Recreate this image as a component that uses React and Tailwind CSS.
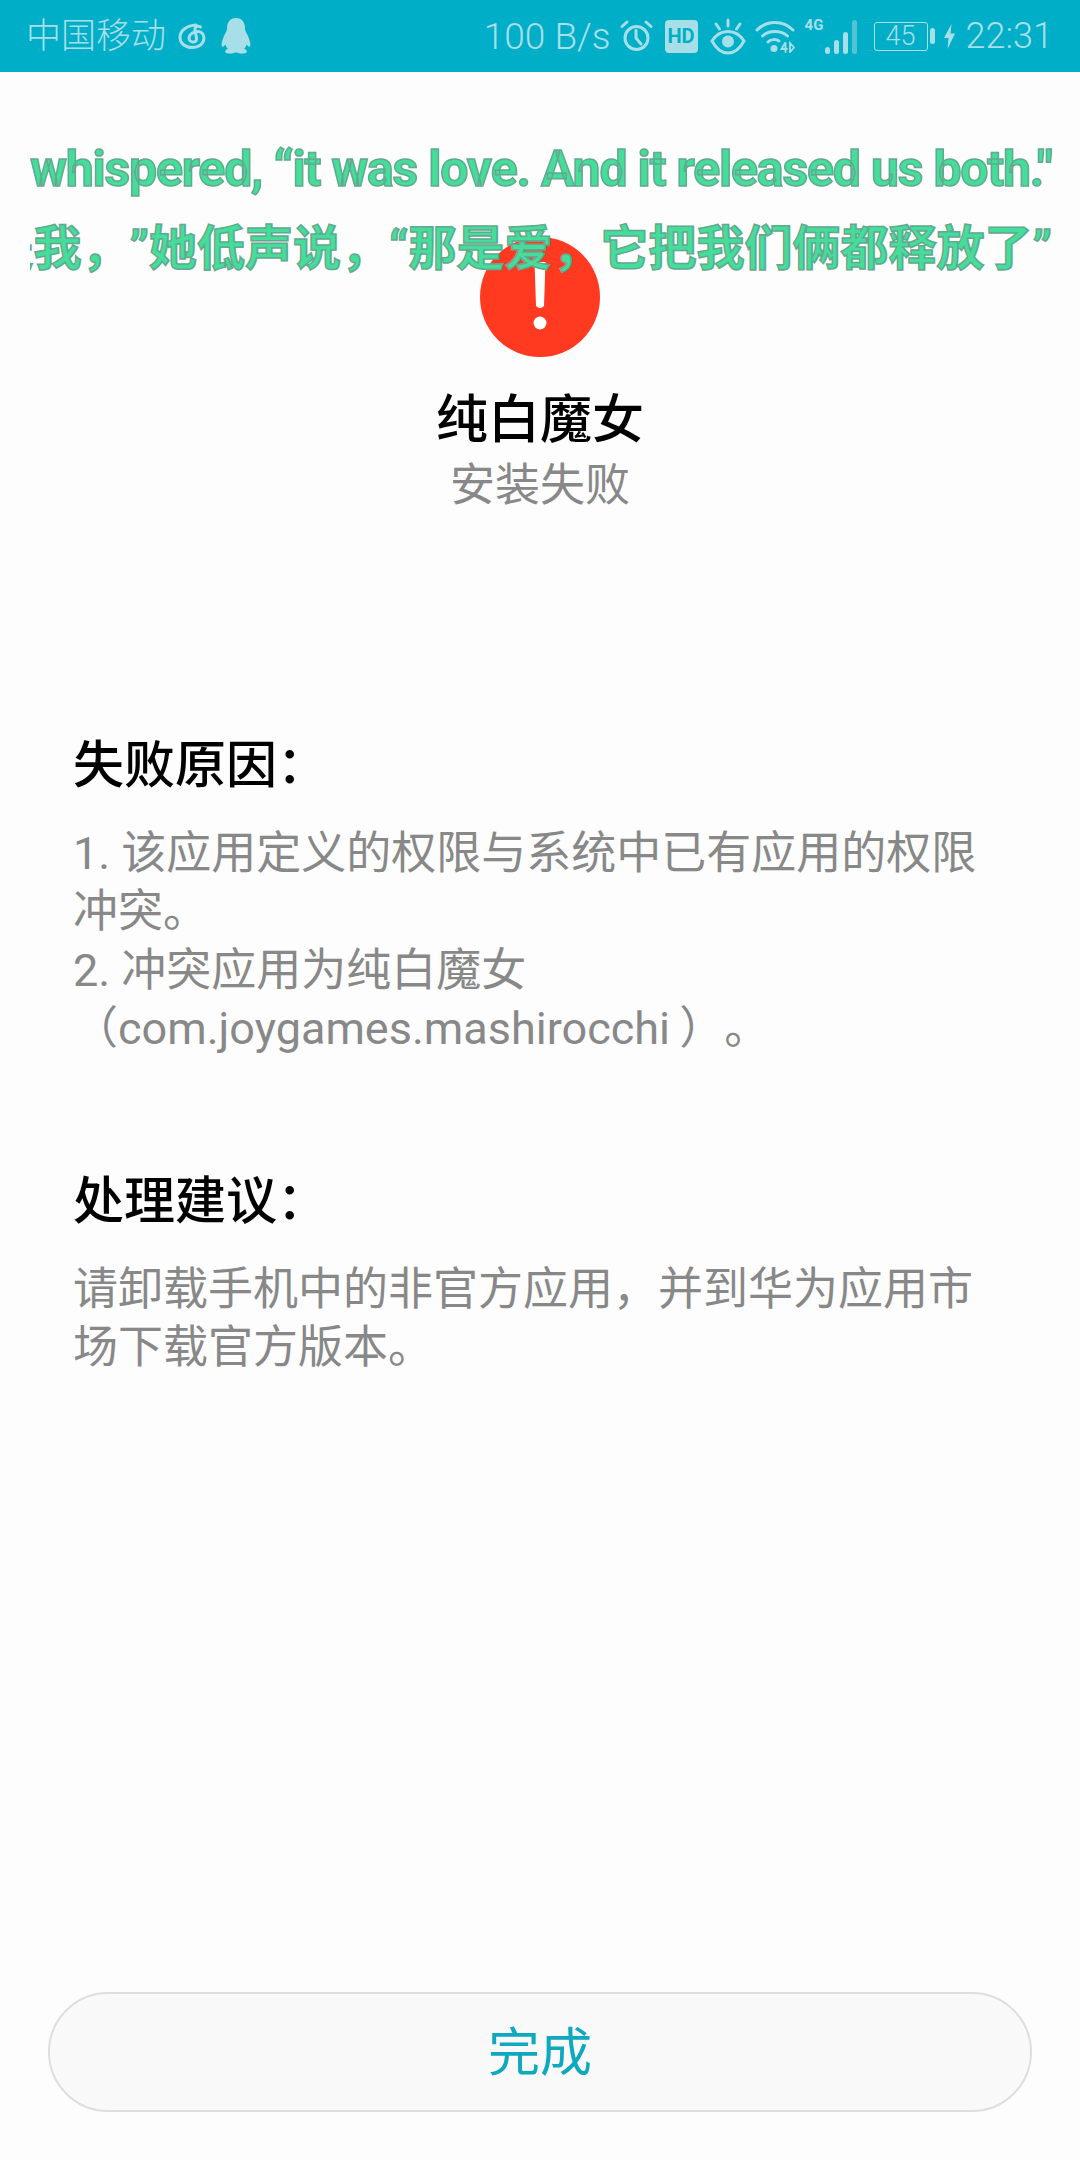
import React from 'react';

const cjk = { fontFamily: 'Roboto, "Noto Sans CJK SC", sans-serif' };

function MusicIcon() {
   return (
      <svg width="28" height="26" viewBox="0 0 28 26" fill="none" stroke="#a6dfe8" strokeWidth="3" strokeLinecap="round">
         <path d="M18 2C9 2.500 2 7.500 2 14.500C2 20.500 7.500 24.500 14 24.500C21 24.500 26 20.500 26 15C26 10.500 22.500 8 19 8.500C15 9 11 11.500 11 15C11 17.500 13 19 15 19C17.500 19 19 17.500 18.500 15L17 7C16.500 4 19.500 2 22.500 4" />
      </svg>
   );
}

function PenguinIcon() {
   return (
      <svg width="30" height="36" viewBox="0 0 30 36" fill="#a6dfe8">
         <path d="M15 0C8.500 0 6 5 6 10C6 13 5 14 3.500 17C1.500 21 0 26 1 28.500C2 29.500 3.500 28 4.500 26.500C5 28.500 5.500 29.500 7 31C4.500 31.500 3.500 33 4.500 34.500C6 36 12 36 14 34.500H16C18 36 24 36 25.500 34.500C26.500 33 25.500 31.500 23 31C24.500 29.500 25 28.500 25.500 26.500C26.500 28 28 29.500 29 28.500C30 26 28.500 21 26.500 17C25 14 24 13 24 10C24 5 21.500 0 15 0Z" />
      </svg>
   );
}

function AlarmIcon() {
   return (
      <svg width="33" height="32" viewBox="0 0 33 32" fill="none" stroke="#a6dfe8" strokeWidth="3" strokeLinecap="round">
         <circle cx="16.500" cy="18" r="11.500" />
         <path d="M16 10.500V18L21 24M2 6.500L7 2M31 6.500L26 2" />
      </svg>
   );
}

function EyeIcon() {
   return (
      <svg width="36" height="37" viewBox="0 0 36 37" fill="none" stroke="#a6dfe8" strokeWidth="3" strokeLinecap="round">
         <path d="M2 23C6 16.500 11 13.500 18 13.500C25 13.500 30 16.500 34 23C30 30.500 25 35 18 35C11 35 6 30.500 2 23Z" />
         <circle cx="18" cy="23.500" r="6" fill="#a6dfe8" stroke="none" />
         <path d="M18 2V8M6 6L9.500 11M30 6L26.500 11" />
      </svg>
   );
}

function WifiIcon() {
   return (
      <svg width="40" height="33" viewBox="0 0 40 33" fill="none" stroke="#a6dfe8" strokeWidth="3" strokeLinecap="round">
         <path d="M2 10C12 0 28 0 38 10M7.500 16C14 10 26 10 32.500 16M13 22C16 19 21 19 24 21" />
         <circle cx="19" cy="28.500" r="3.500" fill="#a6dfe8" stroke="none" />
         <path d="M30 23L26.500 29H32M30.500 23V32M35 23V32L39 27.500Z" strokeWidth="1.800" />
      </svg>
   );
}

function SignalIcon() {
   return (
      <div className="relative w-[52px] h-[36px] flex items-end justify-end gap-[4px]">
         <span className="absolute left-0 top-0 text-[15px] leading-none font-bold text-[#a6dfe8]">4G</span>
         <div className="w-[5px] h-[7px] rounded-full bg-[#a6dfe8]" />
         <div className="w-[5px] h-[14px] rounded-full bg-[#a6dfe8]" />
         <div className="w-[5px] h-[22px] rounded-full bg-[#a6dfe8]" />
         <div className="w-[5px] h-[34px] rounded-full bg-[#55c2d3]" />
      </div>
   );
}

function Battery() {
   return (
      <div className="flex items-center gap-[2px]">
         <div className="w-[54px] h-[29px] rounded-[3px] border border-[#a6dfe8] flex items-center justify-center text-[27px] font-light leading-none text-[#a6dfe8]">45</div>
         <div className="w-[5px] h-[16px] rounded-full bg-[#a6dfe8]" />
      </div>
   );
}

function StatusBar() {
   return (
      <div className="h-[72px] shrink-0 bg-[#00aec7] flex items-center justify-between pl-[26px] pr-[27px] text-[#a6dfe8]">
         <div className="flex items-center">
            <span className="text-[35px] leading-none font-light">中国移动</span>
            <div className="ml-[12px]"><MusicIcon /></div>
            <div className="ml-[15px]"><PenguinIcon /></div>
         </div>
         <div className="flex items-center">
            <span className="text-[37px] leading-none font-light">100 B/s</span>
            <div className="ml-[9px]"><AlarmIcon /></div>
            <div className="ml-[12px] w-[33px] h-[33px] rounded-[4px] bg-[#a6dfe8] flex items-center justify-center text-[20px] font-bold text-[#00aec7] leading-none">HD</div>
            <div className="ml-[12px]"><EyeIcon /></div>
            <div className="ml-[9px]"><WifiIcon /></div>
            <div className="ml-[10px]"><SignalIcon /></div>
            <div className="ml-[17px]"><Battery /></div>
            <svg className="ml-[9px]" width="11" height="25" viewBox="0 0 11 25" fill="#a6dfe8"><path d="M7.500 0L0 14H4.500L3.500 25L11 9.500H6.500Z" /></svg>
            <span className="text-[36px] leading-none font-light ml-[11px]">22:31</span>
         </div>
      </div>
   );
}

function Watermark() {
   const textCls = 'text-[#44dd99] font-bold whitespace-nowrap [-webkit-text-stroke:1.5px_#63a890]';
   return (
      <div className="absolute left-[30px] top-[138px] w-[1022px] overflow-hidden">
         <div className={`${textCls} text-[50px] leading-[62px] tracking-[-1.2px] text-center`}>whispered, “it was love. And it released us both."</div>
         <div className={`${textCls} text-[48px] leading-[62px] flex justify-end mt-[18px] [text-spacing-trim:space-all]`}>是我，”她低声说，“那是爱，它把我们俩都释放了”</div>
      </div>
   );
}

function Section({ title, children, className }) {
   return (
      <div className={className}>
         <h2 className="text-[51px] leading-[62px] font-medium text-black">{title}</h2>
         <p className="mt-[28px] text-[45px] leading-[58.300px] text-[#888888] [text-spacing-trim:space-all]">{children}</p>
      </div>
   );
}

export default function App() {
   return (
      <div className="relative w-[1080px] h-[2160px] bg-[#fdfdfd] flex flex-col overflow-hidden" style={cjk}>
         <StatusBar />

         <div className="flex flex-col items-center pt-[165px]">
            <svg width="120" height="120" viewBox="0 0 120 120">
               <circle cx="60" cy="60" r="60" fill="#ff3a20" />
               <path d="M54.500 25H65.500L64 69Q60 73 56 69Z" fill="#fff" />
               <circle cx="60" cy="86" r="6.500" fill="#fff" />
            </svg>
            <h1 className="mt-[31px] text-[52px] leading-[66px] font-medium text-black">纯白魔女</h1>
            <p className="mt-[2px] text-[45px] leading-[60px] text-[#888888]">安装失败</p>
         </div>

         <div className="px-[73px] pt-[219px] flex-1">
            <Section title="失败原因：">
               1. 该应用定义的权限与系统中已有应用的权限冲突。<br />
               2. 冲突应用为纯白魔女（com.joygames.mashirocchi&thinsp;）。
            </Section>
            <Section title="处理建议：" className="mt-[113px]">
               请卸载手机中的非官方应用，并到华为应用市场下载官方版本。
            </Section>
         </div>

         <div className="px-[48px] pb-[48px]">
            <button className="w-full h-[120px] pt-[3px] rounded-full border-2 border-[#dedede] bg-[#f9f9f9] text-[#0fa9bf] text-[52px] leading-none" style={cjk}>完成</button>
         </div>

         <Watermark />
      </div>
   );
}
